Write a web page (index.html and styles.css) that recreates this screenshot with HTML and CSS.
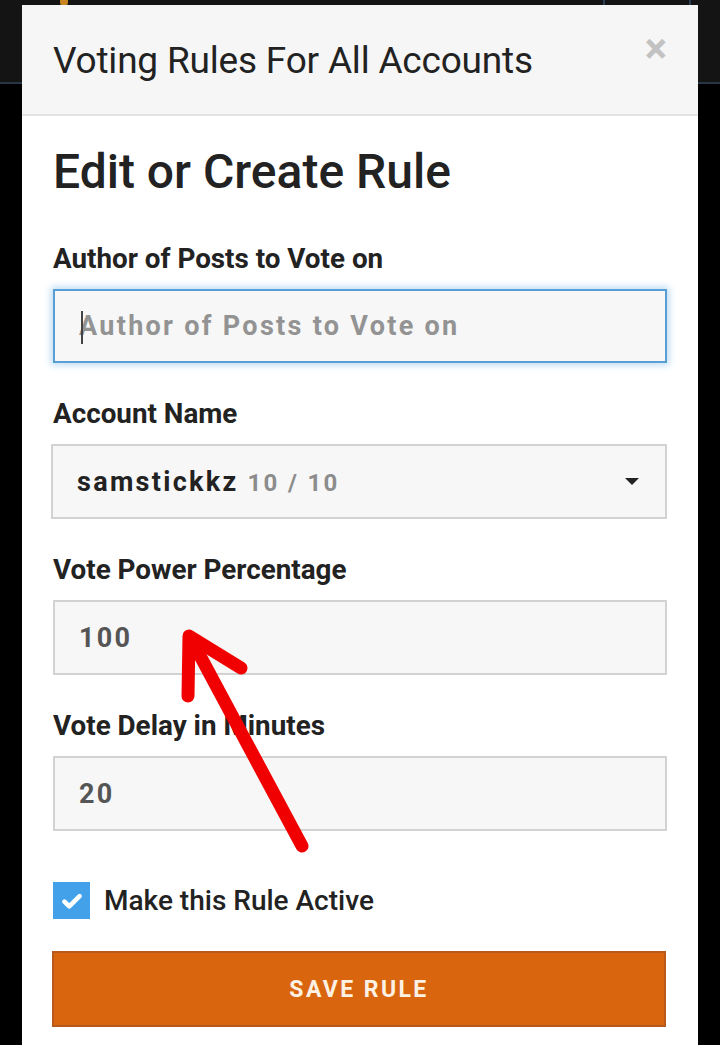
FILE: index.html
```html
<!DOCTYPE html>
<html lang="en">
<head>
<meta charset="utf-8">
<title>Voting Rules For All Accounts</title>
<link rel="stylesheet" href="styles.css">
</head>
<body>
<header class="topbar">
  <span class="topbar-logo"></span>
  <span class="topbar-btn"></span>
</header>

<div class="modal">
  <div class="modal-header">
    <h1 class="modal-title">Voting Rules For All Accounts</h1>
    <span class="modal-close">&times;</span>
  </div>
  <div class="modal-body">
    <h2 class="form-heading">Edit or Create Rule</h2>

    <div class="field">
      <label class="field-label">Author of Posts to Vote on</label>
      <div class="input input-focus"><span class="caret"></span><span class="placeholder">Author of Posts to Vote on</span></div>
    </div>

    <div class="field">
      <label class="field-label">Account Name</label>
      <div class="input select"><span class="select-value">samstickkz <span class="select-count">10 / 10</span></span><span class="select-arrow"></span></div>
    </div>

    <div class="field">
      <label class="field-label">Vote Power Percentage</label>
      <div class="input"><span class="value">100</span></div>
    </div>

    <div class="field">
      <label class="field-label">Vote Delay in Minutes</label>
      <div class="input"><span class="value">20</span></div>
    </div>

    <div class="check-row">
      <span class="checkbox">
        <svg viewBox="0 0 24 24" width="26" height="26"><path d="M5 12.5l4.5 4.5L19 7.5" fill="none" stroke="#fff" stroke-width="4.2" stroke-linecap="round" stroke-linejoin="round"/></svg>
      </span>
      <span class="check-label">Make this Rule Active</span>
    </div>

    <button class="save-btn">SAVE RULE</button>
  </div>
</div>

<svg class="arrow" width="720" height="1045" viewBox="0 0 720 1045">
  <g fill="none" stroke="#f00000" stroke-width="13" stroke-linecap="round" stroke-linejoin="round">
    <path d="M302 846 L190 637"/>
    <path d="M188 696 L189 636 L241 668"/>
  </g>
</svg>
</body>
</html>
```

FILE: styles.css
```css
html, body {
  margin: 0;
  padding: 0;
}
body {
  background: #000;
  width: 720px;
  height: 1045px;
  overflow: hidden;
  position: relative;
  font-family: Roboto, "Liberation Sans", sans-serif;
  color: #222;
}

.topbar {
  height: 82px;
  background: #141414;
  border-bottom: 2px solid #273546;
  position: relative;
}
.topbar-logo {
  position: absolute;
  left: 60px;
  top: 0;
  width: 8px;
  height: 6px;
  background: #c8841e;
  border-radius: 0 0 4px 4px;
}
.topbar-btn {
  position: absolute;
  left: 603px;
  top: -2px;
  width: 84px;
  height: 8px;
  border: 2px solid #2a3e55;
}

.modal {
  position: absolute;
  top: 5px;
  left: 22px;
  width: 676px;
  background: #fff;
}

.modal-header {
  height: 109px;
  background: #f6f6f6;
  border-bottom: 2px solid #e3e3e3;
  display: flex;
  align-items: center;
  justify-content: space-between;
  padding: 0 31px;
}
.modal-title {
  margin: 0;
  font-size: 37px;
  font-weight: 400;
  color: #222;
  line-height: 40px;
  letter-spacing: -0.2px;
  padding-top: 2px;
}
.modal-close {
  font-size: 42px;
  font-weight: 700;
  color: #c2c2c2;
  line-height: 1;
  margin-top: -22px;
  margin-right: 0;
}

.modal-body {
  padding: 29px 31px 30px;
}

.form-heading {
  margin: 0;
  font-size: 48px;
  font-weight: 500;
  line-height: 54px;
  color: #222;
}

.field {
  display: flex;
  flex-direction: column;
  gap: 15px;
}
.form-heading + .field {
  margin-top: 45px;
}
.field + .field {
  margin-top: 36px;
}
.field-label {
  font-size: 27.8px;
  font-weight: 700;
  line-height: 30px;
  color: #222;
}

.input {
  box-sizing: border-box;
  height: 75px;
  border: 2px solid #d2d2d2;
  background: #f7f7f7;
  display: flex;
  align-items: center;
  padding: 0 24px;
  font-size: 27px;
  font-weight: 700;
  letter-spacing: 2.3px;
  position: relative;
}
.input-focus {
  height: 74px;
  border-color: #5a9ed6;
  box-shadow: 0 0 7px 2px rgba(102, 175, 233, 0.45);
}
.caret {
  position: absolute;
  left: 26px;
  top: 20px;
  width: 2px;
  height: 33px;
  background: #444;
}
.placeholder {
  color: #939393;
}
.value {
  color: #555;
}
.select {
  margin-left: -2px;
  justify-content: space-between;
  padding-right: 26px;
}
.select-value {
  color: #222;
}
.select-count {
  color: #8c8c8c;
  font-size: 24px;
}
.select-arrow {
  width: 0;
  height: 0;
  border-left: 7px solid transparent;
  border-right: 7px solid transparent;
  border-top: 7px solid #222;
}

.check-row {
  display: flex;
  align-items: center;
  gap: 14px;
  margin-top: 51px;
}
.checkbox {
  width: 37px;
  height: 37px;
  background: #43a1ea;
  display: flex;
  align-items: center;
  justify-content: center;
}
.check-label {
  font-size: 28px;
  font-weight: 500;
  color: #222;
}

.save-btn {
  display: block;
  width: 100%;
  margin-top: 32px;
  height: 76px;
  background: #d9660e;
  border: 2px solid #b8581a;
  color: #fdf1e3;
  font-family: Roboto, "Liberation Sans", sans-serif;
  font-size: 23px;
  font-weight: 700;
  letter-spacing: 2.4px;
  margin-left: -1px;
}

.arrow {
  position: absolute;
  left: 0;
  top: 0;
  pointer-events: none;
}
```
